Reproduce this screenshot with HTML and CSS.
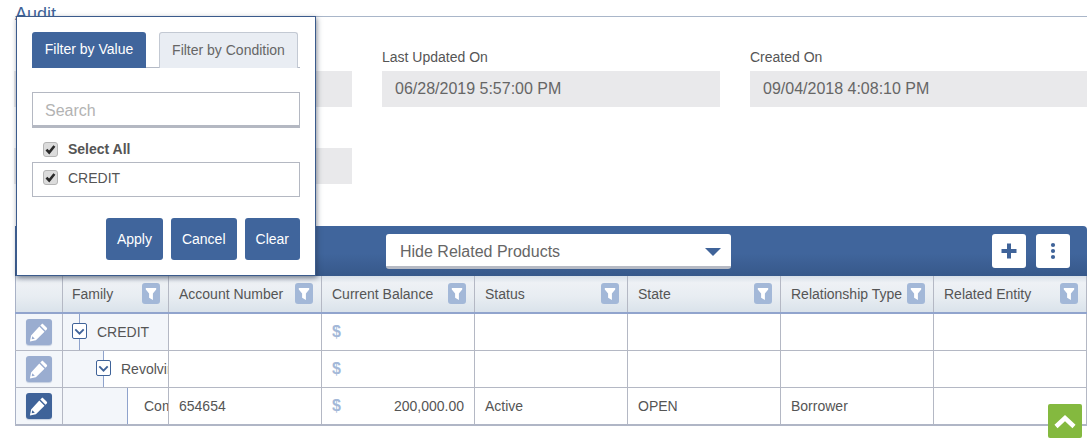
FILE: index.html
```html
<!DOCTYPE html>
<html lang="en">
<head>
<meta charset="utf-8">
<title>Audit</title>
<link rel="stylesheet" href="styles.css">
</head>
<body>
<svg class="defs" width="0" height="0" aria-hidden="true">
  <symbol id="funnel" viewBox="0 0 18 21"><path d="M3.800 5h10.400v1.600l-3.300 4v6.400l-3.800-2.200v-4.200L3.800 6.600z" fill="#fff"/></symbol>
  <symbol id="pencil" viewBox="0 0 26 26"><path d="M17.200 5.200l3.600 3.600c.5.500.5 1.100 0 1.600l-1.300 1.300-5.200-5.200 1.300-1.300c.5-.5 1.100-.5 1.600 0zM13.300 7.500l5.200 5.200-8.600 8.600-6 1.200 1.200-6zM6.300 17.200l-.6 3.100 3.100-.6z" fill="#fff" fill-rule="evenodd"/></symbol>
  <symbol id="chev" viewBox="0 0 15 15"><path d="M3.300 5.400l4.200 4.200 4.200-4.200" fill="none" stroke="#3f6399" stroke-width="1.900"/></symbol>
  <symbol id="tick" viewBox="0 0 15 15"><path d="M2.800 7.600l3.200 3.300 6-7.400" fill="none" stroke="#2a2a2a" stroke-width="3"/></symbol>
</svg>
<div class="page">
  <h2 class="title">Audit</h2>
  <div class="fields">
    <div class="field"><span class="label"></span><div class="value"></div></div>
    <div class="field"><span class="label">Last Updated On</span><div class="value">06/28/2019 5:57:00 PM</div></div>
    <div class="field"><span class="label">Created On</span><div class="value">09/04/2018 4:08:10 PM</div></div>
    <div class="field"><span class="label"></span><div class="value"></div></div>
  </div>

  <div class="toolbar">
    <div class="select"><span>Hide Related Products</span><span class="caret"></span></div>
    <div class="tools">
      <button class="tool"><svg width="18" height="18" viewBox="0 0 18 18"><path d="M7 1.500h4v5.500h5.500v4H11v5.500H7V11H1.500V7H7z" fill="#3f6399"/></svg></button>
      <button class="tool"><svg width="6" height="18" viewBox="0 0 6 18"><circle cx="3" cy="3" r="2.100" fill="#3f6399"/><circle cx="3" cy="9" r="2.100" fill="#3f6399"/><circle cx="3" cy="15" r="2.100" fill="#3f6399"/></svg></button>
    </div>
  </div>

  <table class="grid">
    <colgroup>
      <col class="c-edit"><col class="c-fam"><col class="c"><col class="c"><col class="c"><col class="c"><col class="c"><col class="c">
    </colgroup>
    <thead>
      <tr>
        <th></th>
        <th><div class="th th-family"><span>Family</span><svg class="filter"><use href="#funnel"/></svg></div></th>
        <th><div class="th"><span>Account Number</span><svg class="filter"><use href="#funnel"/></svg></div></th>
        <th><div class="th"><span>Current Balance</span><svg class="filter"><use href="#funnel"/></svg></div></th>
        <th><div class="th"><span>Status</span><svg class="filter"><use href="#funnel"/></svg></div></th>
        <th><div class="th"><span>State</span><svg class="filter"><use href="#funnel"/></svg></div></th>
        <th><div class="th"><span>Relationship Type</span><svg class="filter"><use href="#funnel"/></svg></div></th>
        <th><div class="th"><span>Related Entity</span><svg class="filter"><use href="#funnel"/></svg></div></th>
      </tr>
    </thead>
    <tbody>
      <tr>
        <td class="edit"><div class="pen off"><svg width="26" height="26"><use href="#pencil"/></svg></div></td>
        <td class="tree tint"><div class="tree-row"><div class="indent lvl0"><span class="toggle"><svg width="15" height="15"><use href="#chev"/></svg></span></div><span class="node">CREDIT</span></div></td>
        <td></td><td class="money"><span class="usd">$</span></td><td></td><td></td><td></td><td></td>
      </tr>
      <tr>
        <td class="edit"><div class="pen off"><svg width="26" height="26"><use href="#pencil"/></svg></div></td>
        <td class="tree"><div class="tree-row"><div class="indent lvl1"><span class="toggle"><svg width="15" height="15"><use href="#chev"/></svg></span></div><span class="node">Revolving</span></div></td>
        <td></td><td class="money"><span class="usd">$</span></td><td></td><td></td><td></td><td></td>
      </tr>
      <tr>
        <td class="edit"><div class="pen"><svg width="26" height="26"><use href="#pencil"/></svg></div></td>
        <td class="tree"><div class="tree-row"><div class="indent lvl2"></div><span class="node leaf">Commercial</span></div></td>
        <td>654654</td><td class="money"><span class="usd">$</span><span>200,000.00</span></td><td>Active</td><td>OPEN</td><td>Borrower</td><td></td>
      </tr>
    </tbody>
  </table>

  <div class="popup">
    <div class="tabs">
      <div class="tab on">Filter by Value</div>
      <div class="tab">Filter by Condition</div>
    </div>
    <div class="search">Search</div>
    <div class="check all"><svg class="box" width="15" height="15"><use href="#tick"/></svg><b>Select All</b></div>
    <div class="check item"><svg class="box" width="15" height="15"><use href="#tick"/></svg><span>CREDIT</span></div>
    <div class="actions">
      <button class="btn">Apply</button>
      <button class="btn">Cancel</button>
      <button class="btn">Clear</button>
    </div>
  </div>

  <button class="top"><svg width="26" height="16" viewBox="0 0 26 16"><path d="M4 13.500l9-8.500 9 8.500" fill="none" stroke="#fff" stroke-width="4.500"/></svg></button>
</div>
</body>
</html>
```
FILE: styles.css
```css
* { box-sizing: border-box; }
html, body { margin: 0; height: 100%; overflow: hidden; }
body { background: #fff; font-family: "Liberation Sans", Arial, sans-serif; font-size: 14px; color: #555; }
.defs { position: absolute; }
.page { position: relative; height: 440px; padding: 0 4px 0 15px; }
.title { margin: 0; height: 17px; border-bottom: 1px solid #a9b6c9; font-size: 18px; font-weight: 400; line-height: 29px; color: #3f6399; }
.fields { display: grid; grid-template-columns: 338px 338px 337px; column-gap: 30px; row-gap: 5px; margin: 33px 0 0 -1px; }
.field { display: flex; flex-direction: column; height: 72px; }
.label { height: 21px; line-height: 15px; font-size: 14px; color: #555; }
.value { height: 36px; padding: 0 13px; background: #e9e9eb; font-size: 16px; line-height: 36px; color: #666; }
.toolbar { display: flex; align-items: flex-start; justify-content: space-between; height: 50px; margin-top: 27px; padding: 8px 17px 0 371px; background: linear-gradient(#40659c 0, #40659c 55%, #37588a 100%); border-radius: 0 4px 0 0; }
.select { display: flex; align-items: center; justify-content: space-between; width: 345px; height: 35px; padding: 4px 10px 0 14px; background: #fff; border-bottom: 3px solid #b6bac4; border-radius: 3px; font-size: 16px; color: #666; }
.caret { width: 0; height: 0; border-left: 8px solid transparent; border-right: 8px solid transparent; border-top: 8px solid #3f6399; }
.tools { display: flex; gap: 10px; }
.tool { display: flex; align-items: center; justify-content: center; width: 34px; height: 34px; padding: 0; background: #fff; border: 0; border-radius: 3px; }
.grid { width: 1071px; table-layout: fixed; border-collapse: collapse; border-right: 1px solid #b4b8c4; border-left: 1px solid #a9b2c6; border-bottom: 2px solid #b0b6c6; }
.c-edit { width: 47px; }
.c-fam { width: 106px; }
.c { width: 153px; }
.grid thead tr { height: 37px; background: linear-gradient(#d8dfe8 0, #eef1f5 18%, #e8edf2 55%, #d9e2ea 100%); }
.grid th { padding: 0; border-right: 1px solid #b4b8c4; border-bottom: 2px solid #91a4cd; font-weight: 400; }
.th { display: flex; align-items: center; justify-content: space-between; padding: 0 8px 1px 10px; text-align: left; color: #555; white-space: nowrap; }
.th-family { padding-left: 9px; }
.filter { width: 18px; height: 21px; background: #a3b8d8; border-radius: 3px; flex: none; }
.grid tbody tr { height: 37px; }
.grid td { padding: 0 10px; border-right: 1px solid #b4b8c4; border-bottom: 1px solid #b4b8c4; white-space: nowrap; overflow: hidden; color: #555; }
.grid td.edit { padding: 0 0 0 10px; background: #f3f6fa; }
.grid tbody tr:last-child td { border-bottom: 0; }
.pen { width: 26px; height: 26px; background: #3f6399; border-radius: 3px; box-shadow: 0 1px 1px #c4cfe0; }
.pen.off { background: #9aadd0; }
.pen svg { display: block; }
.grid td.tree { padding: 0; }
.grid td.tint { background: #f3f6fa; }
.tree-row { display: flex; height: 36px; overflow: hidden; }
.indent { position: relative; flex: none; background: #f3f6fa; }
.lvl0 { width: 34px; }
.lvl1 { width: 41px; }
.lvl2 { width: 65px; border-right: 1px solid #8fa3cc; }
.lvl0::before, .lvl1::before { content: ""; position: absolute; top: 0; bottom: 0; width: 1px; background: #8fa3cc; }
.lvl0::before { left: 16px; }
.lvl1::before { left: 40px; }
.toggle { position: absolute; top: 9px; width: 15px; height: 16px; background: #fff; border: 1px solid #3f6399; border-radius: 2px; }
.toggle svg { display: block; margin: 0 0 0 -1px; }
.lvl0 .toggle { left: 9px; }
.lvl1 .toggle { left: 33px; }
.node { line-height: 36px; }
.lvl1 + .node { padding-left: 17px; }
.leaf { padding-left: 16px; }
.money { text-align: right; }
.usd { float: left; font-size: 16px; font-weight: 700; line-height: 16px; color: #a3b8d8; }
.popup { position: absolute; left: 16px; top: 16px; width: 300px; height: 260px; padding: 15px 16px 0; background: #fff; border: 1px solid #3b5b8c; box-shadow: 1px 2px 5px rgba(40,50,70,.55); }
.tabs { display: flex; gap: 13px; height: 36px; width: 268px; border-bottom: 1px solid #b4bac6; margin-left: -1px; }
.tab { width: 139px; height: 36px; padding-top: 9px; text-align: center; background: #e9edf3; border: 1px solid #c3c9d3; border-bottom: 0; border-radius: 3px 3px 0 0; color: #666; white-space: nowrap; }
.tab.on { width: 114px; background: #40659c; border: 0; color: #fff; }
.search { width: 268px; height: 36px; margin: 24px 0 0 -1px; padding: 0 12px; border: 1px solid #b4b8c2; border-bottom: 3px solid #b4b8c2; font-size: 16px; line-height: 36px; color: #b3b3b3; }
.check { display: flex; align-items: center; color: #555; }
.all { height: 34px; padding: 8px 0 0 10px; }
.item { width: 268px; height: 35px; margin-left: -1px; padding-left: 10px; border: 1px solid #b4b8c2; padding-bottom: 4px; }
.box { flex: none; margin-right: 10px; background: #dcdcdc; border: 1px solid #b5b5b5; border-radius: 3px; }
.actions { display: flex; justify-content: flex-end; gap: 8px; width: 268px; margin: 21px 0 0 -1px; }
.btn { height: 42px; padding: 0 11px; background: #40659c; border: 0; border-radius: 3px; color: #fff; font: 14px "Liberation Sans", Arial, sans-serif; }
.top { position: absolute; left: 1048px; top: 404px; display: flex; align-items: center; justify-content: center; width: 34px; height: 34px; padding: 0; background: #84b93f; border: 0; border-radius: 2px; }
```
